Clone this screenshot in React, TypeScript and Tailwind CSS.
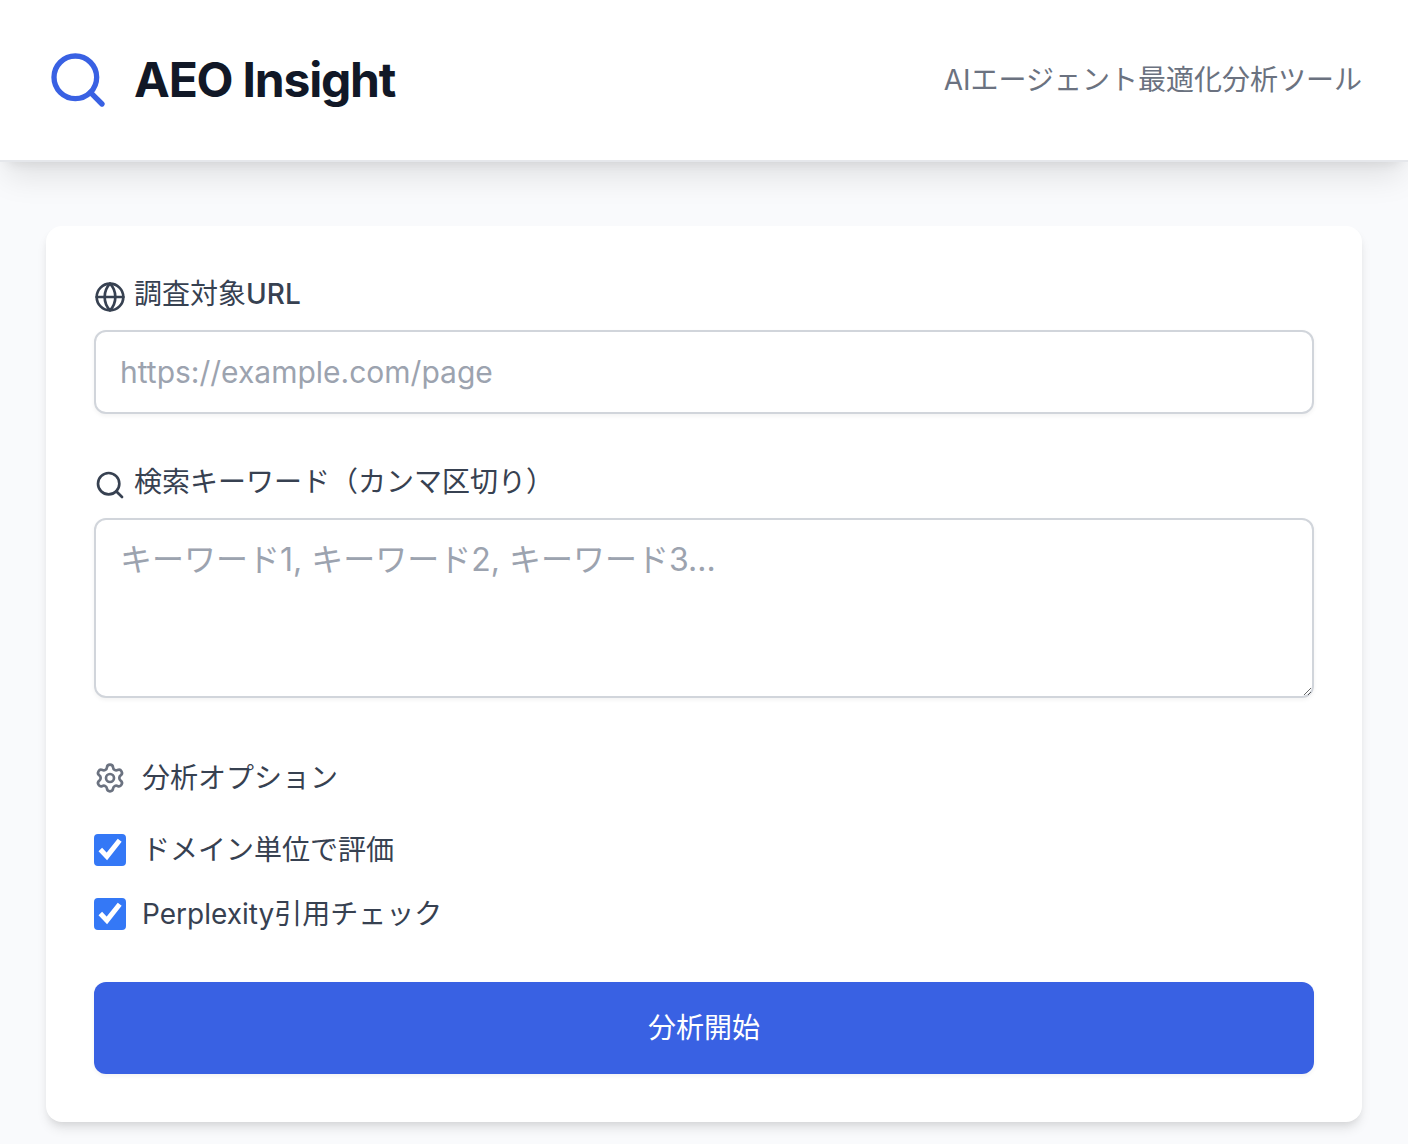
import { useState } from 'react';
import { Globe, Search, Settings } from 'lucide-react';

function App() {
  const [url, setUrl] = useState('');
  const [keywords, setKeywords] = useState('');
  const [options, setOptions] = useState({ domain: true, perplexity: true });

  const optionList = [
    { key: 'domain' as const, label: 'ドメイン単位で評価' },
    { key: 'perplexity' as const, label: 'Perplexity引用チェック' },
  ];

  return (
    <div className="min-h-screen bg-[#f9fafc] font-['Inter','Noto_Sans_CJK_JP',sans-serif] text-[28px] leading-10 text-[#374151]">
      {/* Header */}
      <header className="flex items-center justify-between border-b-2 border-[#e5e7eb] bg-white px-[46px] py-12 shadow-[0_20px_30px_-6px_rgba(0,0,0,0.1),0_8px_12px_-8px_rgba(0,0,0,0.1)]">
        <div className="flex items-center gap-6">
          <Search className="size-16 text-[#3961e3]" />
          <h1 className="text-5xl leading-16 font-bold tracking-tight text-[#111827]">AEO Insight</h1>
        </div>
        <p className="text-[#6b7280]">AIエージェント最適化分析ツール</p>
      </header>

      {/* Analysis form */}
      <main className="px-[46px] pt-16 pb-[22px]">
        <form
          onSubmit={(e) => e.preventDefault()}
          className="rounded-2xl bg-white p-12 shadow-[0_8px_12px_-2px_rgba(0,0,0,0.1),0_4px_8px_-4px_rgba(0,0,0,0.1)]"
        >
          <div className="mb-12">
            <label htmlFor="url" className="mb-4 flex items-center gap-2">
              <Globe className="mt-1.5 size-8" />
              <span>
                調査対象<span className="font-medium">URL</span>
              </span>
            </label>
            <input
              id="url"
              type="url"
              value={url}
              onChange={(e) => setUrl(e.target.value)}
              placeholder="https://example.com/page"
              className="block h-21 w-full rounded-xl border-2 border-[#d1d5db] bg-white px-6 text-3xl shadow-[0_2px_4px_rgba(0,0,0,0.05)] placeholder:text-[#9ca3af]"
            />
          </div>

          <div className="mb-15">
            <label htmlFor="keywords" className="mb-4 flex items-center gap-2">
              <Search className="mt-1.5 size-8" />
              <span>検索キーワード（カンマ区切り）</span>
            </label>
            <textarea
              id="keywords"
              value={keywords}
              onChange={(e) => setKeywords(e.target.value)}
              placeholder="キーワード1, キーワード2, キーワード3..."
              className="block h-45 w-full resize-y rounded-xl border-2 border-[#d1d5db] bg-white px-6 py-4 text-[32px] leading-12 shadow-[0_2px_4px_rgba(0,0,0,0.05)] placeholder:text-[#9ca3af]"
            />
          </div>

          <fieldset>
            <legend className="mb-8 flex items-center gap-4">
              <Settings className="size-8 text-[#6b7280]" />
              <span>分析オプション</span>
            </legend>
            <div className="flex flex-col gap-6">
              {optionList.map((option) => (
                <label key={option.key} className="flex items-center gap-4">
                  <span className="grid size-8">
                    <input
                      type="checkbox"
                      checked={options[option.key]}
                      onChange={(e) => setOptions({ ...options, [option.key]: e.target.checked })}
                      className="peer col-start-1 row-start-1 size-8 appearance-none rounded-[4px] border-2 border-[#d1d5db] bg-white checked:border-[#3478f6] checked:bg-[#3478f6]"
                    />
                    <svg
                      viewBox="0 0 32 32"
                      fill="none"
                      stroke="white"
                      strokeWidth="5"
                      className="pointer-events-none invisible col-start-1 row-start-1 size-8 peer-checked:visible"
                    >
                      <path d="M6.3 15.6 L12.9 22.4 L25.7 6.2" />
                    </svg>
                  </span>
                  <span>{option.label}</span>
                </label>
              ))}
            </div>
          </fieldset>

          <button
            type="submit"
            className="mt-12 h-23 w-full rounded-xl bg-[#3961e3] text-white shadow-[0_2px_4px_rgba(0,0,0,0.05)]"
          >
            分析開始
          </button>
        </form>
      </main>
    </div>
  );
}

export default App;
